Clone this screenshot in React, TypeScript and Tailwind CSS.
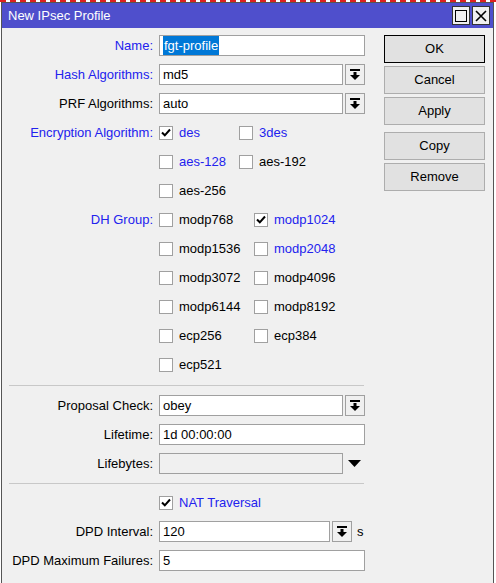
import React from 'react';

const blue = 'text-[#2222ee]';

function DropIcon() {
  return (
    <svg width="10" height="11" viewBox="0 0 10 11">
      <rect x="0" y="0" width="10" height="2" fill="#000" />
      <rect x="3.5" y="3" width="3" height="3" fill="#000" />
      <polygon points="0,6 10,6 5,11" fill="#000" />
    </svg>
  );
}

function Check({ checked }: { checked?: boolean }) {
  return (
    <span className="flex h-[14px] w-[14px] shrink-0 items-center justify-center border border-[#a0a0a0] bg-white">
      {checked && (
        <svg width="10" height="9" viewBox="0 0 10 9">
          <path d="M1 4.5 L3.8 7.3 L9 1.5" stroke="#000" strokeWidth="2" fill="none" />
        </svg>
      )}
    </span>
  );
}

function Label({ text, isBlue }: { text: string; isBlue?: boolean }) {
  return (
    <div className={`w-[152px] shrink-0 pr-[1px] text-right ${isBlue ? blue : 'text-black'}`}>
      {text}
    </div>
  );
}

function Row({ children }: { children: React.ReactNode }) {
  return <div className="flex h-[21px] items-center gap-[5px]">{children}</div>;
}

function Box({ value, w, selected }: { value: string; w: string; selected?: boolean }) {
  return (
    <div className={`flex h-[21px] ${w} items-center border border-[#a0a0a0] bg-white pl-[3px]`}>
      {selected ? <span className="bg-[#0078d7] px-[1px] text-white">{value}</span> : <span>{value}</span>}
    </div>
  );
}

function DropBtn() {
  return (
    <div className="ml-[2px] flex h-[21px] w-[20px] items-center justify-center border border-[#a0a0a0] bg-[#f0f0f0]">
      <DropIcon />
    </div>
  );
}

function Opt({ label, checked, isBlue, w }: { label: string; checked?: boolean; isBlue?: boolean; w: string }) {
  return (
    <div className={`flex ${w} items-center gap-[6px]`}>
      <Check checked={checked} />
      <span className={isBlue ? blue : 'text-black'}>{label}</span>
    </div>
  );
}

function Btn({ text, def }: { text: string; def?: boolean }) {
  return (
    <div
      className={`flex h-[28px] w-[101px] items-center justify-center border ${def ? 'border-black' : 'border-[#adadad]'} bg-[#e1e1e1]`}
    >
      {text}
    </div>
  );
}

export default function App() {
  const dh: [string, boolean, boolean, string | null, boolean, boolean][] = [
    ['modp1536', false, false, 'modp2048', false, true],
    ['modp3072', false, false, 'modp4096', false, false],
    ['modp6144', false, false, 'modp8192', false, false],
    ['ecp256', false, false, 'ecp384', false, false],
    ['ecp521', false, false, null, false, false],
  ];

  return (
    <div
      className="h-[583px] w-[496px] overflow-hidden bg-white text-[13px] text-black"
      style={{ fontFamily: '"Liberation Sans", Arial, sans-serif' }}
    >
      <div className="h-[2px] border-t-2 border-dashed border-[#e02020]" />
      <div className="ml-[1px] flex h-[581px] w-[493px] flex-col border border-[#555] border-b-0 bg-[#f0f0f0]">
        <div className="flex h-[25px] shrink-0 items-center justify-between bg-[#4f4fcc] pl-[6px] pr-[3px]">
          <span className="text-[13px] text-white">New IPsec Profile</span>
          <div className="flex gap-[2px]">
            <div className="flex h-[19px] w-[18px] items-center justify-center border border-[#333] bg-[#f0f0f0]">
              <div className="h-[12px] w-[12px] border-[1.5px] border-black" />
            </div>
            <div className="flex h-[19px] w-[18px] items-center justify-center border border-[#333] bg-[#f0f0f0]">
              <svg width="12" height="12" viewBox="0 0 12 12">
                <path d="M1 1 L11 11 M11 1 L1 11" stroke="#000" strokeWidth="1.6" />
              </svg>
            </div>
          </div>
        </div>

        <div className="flex">
          <div className="flex w-[374px] flex-col gap-[8px] pt-[7px]">
            <Row>
              <Label text="Name:" isBlue />
              <Box value="fgt-profile" w="w-[206px]" selected />
            </Row>
            <Row>
              <Label text="Hash Algorithms:" isBlue />
              <div className="flex">
                <Box value="md5" w="w-[184px]" />
                <DropBtn />
              </div>
            </Row>
            <Row>
              <Label text="PRF Algorithms:" />
              <div className="flex">
                <Box value="auto" w="w-[184px]" />
                <DropBtn />
              </div>
            </Row>
            <Row>
              <Label text="Encryption Algorithm:" isBlue />
              <Opt label="des" checked isBlue w="w-[75px]" />
              <Opt label="3des" isBlue w="w-[75px]" />
            </Row>
            <Row>
              <Label text="" />
              <Opt label="aes-128" isBlue w="w-[75px]" />
              <Opt label="aes-192" w="w-[75px]" />
            </Row>
            <Row>
              <Label text="" />
              <Opt label="aes-256" w="w-[75px]" />
            </Row>
            <Row>
              <Label text="DH Group:" isBlue />
              <Opt label="modp768" w="w-[90px]" />
              <Opt label="modp1024" checked isBlue w="w-[90px]" />
            </Row>
            {dh.map(([a, ac, ab, b, bc, bb]) => (
              <Row key={a}>
                <Label text="" />
                <Opt label={a} checked={ac} isBlue={ab} w="w-[90px]" />
                {b && <Opt label={b} checked={bc} isBlue={bb} w="w-[90px]" />}
              </Row>
            ))}

            <div className="mt-[2px] mb-[1px] ml-[7px] h-px w-[355px] bg-[#c8c8c8]" />

            <Row>
              <Label text="Proposal Check:" />
              <div className="flex">
                <Box value="obey" w="w-[184px]" />
                <DropBtn />
              </div>
            </Row>
            <Row>
              <Label text="Lifetime:" />
              <Box value="1d 00:00:00" w="w-[206px]" />
            </Row>
            <Row>
              <Label text="Lifebytes:" />
              <div className="flex items-center">
                <div className="h-[21px] w-[184px] border border-[#a0a0a0] bg-[#f0f0f0]" />
                <svg className="ml-[5px]" width="13" height="8" viewBox="0 0 13 8">
                  <polygon points="0,0 13,0 6.5,7" fill="#000" />
                </svg>
              </div>
            </Row>

            <div className="mt-[1px] ml-[7px] h-px w-[355px] bg-[#c8c8c8]" />

            <Row>
              <Label text="" />
              <Opt label="NAT Traversal" checked isBlue w="w-[150px]" />
            </Row>
            <Row>
              <Label text="DPD Interval:" />
              <div className="flex items-center">
                <Box value="120" w="w-[171px]" />
                <DropBtn />
                <span className="ml-[5px]">s</span>
              </div>
            </Row>
            <Row>
              <Label text="DPD Maximum Failures:" />
              <Box value="5" w="w-[206px]" />
            </Row>
          </div>

          <div className="ml-[8px] flex flex-col pt-[7px]">
            <Btn text="OK" def />
            <div className="mt-[3px]">
              <Btn text="Cancel" />
            </div>
            <div className="mt-[3px]">
              <Btn text="Apply" />
            </div>
            <div className="mt-[7px]">
              <Btn text="Copy" />
            </div>
            <div className="mt-[3px]">
              <Btn text="Remove" />
            </div>
          </div>
        </div>
      </div>
    </div>
  );
}
